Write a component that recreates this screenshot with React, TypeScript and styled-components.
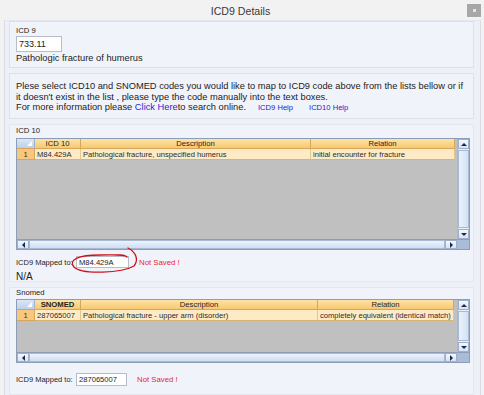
import React from "react";
import styled, { createGlobalStyle } from "styled-components";

const Global = createGlobalStyle`
  html, body { margin: 0; padding: 0; background: #f2f2f2; }
  body { font-family: "Liberation Sans", Arial, sans-serif; color: #1e1e1e; }
  #root { width: 484px; height: 395px; overflow: hidden; }
`;

const Window = styled.div`
  width: 484px;
  height: 395px;
  display: flex;
  flex-direction: column;
  background: #f2f2f2;
`;

const TitleBar = styled.div`
  height: 20px;
  display: grid;
  grid-template-columns: 1fr auto 1fr;
  align-items: center;
  padding: 0 3px 0 0;
  box-sizing: border-box;
`;

const Title = styled.div`
  grid-column: 2;
  font-size: 10.6px;
  color: #3a3a3a;
  padding-top: 1px;
`;

const CloseBtn = styled.div`
  grid-column: 3;
  justify-self: end;
  width: 14px;
  height: 13px;
  background: #a7a7a7;
  display: flex;
  align-items: center;
  justify-content: center;
  &::after {
    content: "";
    width: 3px;
    height: 3px;
    background: #e4e4e4;
  }
`;

const Panel = styled.div`
  flex: 1;
  margin: 0 3px 0 4px;
  border-left: 1px solid #d9dce4;
  border-right: 1px solid #d9dce4;
  border-top: 1px solid #e4e6ee;
  background: #eef0f8;
  padding: 0 6px 0 4px;
  display: flex;
  flex-direction: column;
  gap: 5px;
  overflow: hidden;
`;

const Group = styled.div<{ $pt?: number; $pb?: number; $pl?: number; $soft?: boolean }>`
  flex-shrink: 0;
  background: #f1f3fb;
  border: 1px solid ${(p) => (p.$soft ? "#e4e7f0" : "#dde0ea")};
  padding: ${(p) => p.$pt ?? 4}px 6px ${(p) => p.$pb ?? 3}px ${(p) => p.$pl ?? 6}px;
  display: flex;
  flex-direction: column;
  align-items: flex-start;
`;

const SmallLabel = styled.div<{ $lh?: number }>`
  font-size: 7.7px;
  line-height: ${(p) => p.$lh ?? 11}px;
  color: #222;
`;

const CodeInput = styled.div<{ $w: number; $h: number; $fs: number }>`
  width: ${(p) => p.$w}px;
  height: ${(p) => p.$h}px;
  box-sizing: border-box;
  background: #fff;
  border: 1px solid #b9bcc6;
  font-size: ${(p) => p.$fs}px;
  display: flex;
  align-items: center;
  padding-left: 2px;
  color: #222;
`;

const BodyText = styled.div<{ $fs?: number; $lh?: number; $mt?: number }>`
  font-size: ${(p) => p.$fs ?? 9.3}px;
  line-height: ${(p) => p.$lh ?? 12}px;
  margin-top: ${(p) => p.$mt ?? 0}px;
  color: #222;
`;

const InfoText = styled.div`
  font-size: 9.3px;
  line-height: 10.6px;
  color: #222;
`;

const LinkLine = styled.div`
  display: flex;
  align-items: baseline;
  font-size: 9.3px;
  line-height: 11px;
  color: #222;
`;

const Link = styled.span`
  color: #2626d8;
`;

const HelpLink = styled.span<{ $ml: number }>`
  color: #2222cc;
  font-size: 7.6px;
  margin-left: ${(p) => p.$ml}px;
`;

const GridBox = styled.div<{ $h: number; $mt: number }>`
  margin-top: ${(p) => p.$mt}px;
  width: 454px;
  height: ${(p) => p.$h}px;
  flex: 0 0 ${(p) => p.$h}px;
  box-sizing: border-box;
  border: 1px solid #8d9db5;
  display: grid;
  grid-template-columns: 1fr 12px;
  grid-template-rows: 1fr 10px;
  background: #c0c0c0;
`;

const GridBody = styled.div`
  display: flex;
  flex-direction: column;
  overflow: hidden;
`;

const Row = styled.div<{ $cols: string; $h: number }>`
  display: grid;
  grid-template-columns: ${(p) => p.$cols};
  height: ${(p) => p.$h}px;
`;

const HeadCell = styled.div<{ $bold?: boolean }>`
  background: linear-gradient(#fde3a6, #f7c970);
  border-right: 1px solid #d7a656;
  border-bottom: 1px solid #d7a656;
  font-size: 7.7px;
  font-weight: ${(p) => (p.$bold ? 700 : 400)};
  color: #1f1f1f;
  display: flex;
  align-items: center;
  justify-content: center;
  overflow: hidden;
  white-space: nowrap;
`;

const CornerCell = styled.div`
  background: linear-gradient(#dce6f6, #bccfec);
  border-right: 1px solid #9fb2cf;
  border-bottom: 1px solid #d7a656;
  position: relative;
  &::after {
    content: "";
    position: absolute;
    right: 2px;
    bottom: 2px;
    width: 0;
    height: 0;
    border-left: 5px solid transparent;
    border-bottom: 5px solid #ffffff;
  }
`;

const RowHeadCell = styled.div`
  background: #f9c77c;
  border-right: 1px solid #d7a656;
  border-bottom: 1px solid #d7a656;
  font-size: 7.6px;
  display: flex;
  align-items: center;
  justify-content: center;
  color: #333;
`;

const DataCell = styled.div`
  background: #feebc6;
  border-right: 1px solid #e3c690;
  border-bottom: 1px solid #d8b46e;
  font-size: 7.6px;
  display: flex;
  align-items: center;
  padding-left: 2px;
  overflow: hidden;
  white-space: nowrap;
  color: #2a2a2a;
`;

const VScroll = styled.div`
  background: #e6eef9;
  border-left: 1px solid #a9b8cf;
  display: flex;
  flex-direction: column;
`;

const HScroll = styled.div`
  background: #e6eef9;
  border-top: 1px solid #8d9db5;
  display: flex;
`;

const ArrowBtn = styled.div<{ $dir: "up" | "down" | "left" | "right" }>`
  flex: 0 0 ${(p) => (p.$dir === "up" || p.$dir === "down" ? "10px" : "12px")};
  background: linear-gradient(#f4f8fd, #d6e3f5);
  border: 1px solid #9eb0cb;
  box-sizing: border-box;
  display: flex;
  align-items: center;
  justify-content: center;
  &::after {
    content: "";
    width: 0;
    height: 0;
    ${(p) =>
      p.$dir === "up"
        ? "border-left:3px solid transparent;border-right:3px solid transparent;border-bottom:3px solid #1c2a44;"
        : p.$dir === "down"
        ? "border-left:3px solid transparent;border-right:3px solid transparent;border-top:3px solid #1c2a44;"
        : p.$dir === "left"
        ? "border-top:3px solid transparent;border-bottom:3px solid transparent;border-right:3px solid #1c2a44;"
        : "border-top:3px solid transparent;border-bottom:3px solid transparent;border-left:3px solid #1c2a44;"}
  }
`;

const Thumb = styled.div`
  flex: 1;
  background: linear-gradient(90deg, #eaf1fb, #d4e2f5);
  border: 1px solid #a7b9d3;
  box-sizing: border-box;
  margin: 1px 0;
`;

const HThumb = styled.div`
  flex: 1;
  background: linear-gradient(#edf3fc, #cfdef3);
  border: 1px solid #a7b9d3;
  box-sizing: border-box;
`;

const ScrollCorner = styled.div`
  background: #a9bcd8;
  border-top: 1px solid #8d9db5;
  border-left: 1px solid #a9b8cf;
`;

const MappedRow = styled.div<{ $mt: number }>`
  position: relative;
  margin-top: ${(p) => p.$mt}px;
  display: flex;
  align-items: center;
`;

const MappedLabel = styled.span`
  font-size: 7.5px;
  color: #222;
  width: 60px;
`;

const NotSaved = styled.span`
  font-size: 7.8px;
  color: #e8282c;
  margin-left: 10px;
`;

const Annotation = styled.svg`
  position: absolute;
  left: 0;
  top: 0;
  overflow: visible;
  pointer-events: none;
`;

type GridProps = {
  cols: string;
  heads: string[];
  cells: string[];
  height: number;
  mt: number;
  boldFirst?: boolean;
};

function DataGrid({ cols, heads, cells, height, mt, boldFirst }: GridProps) {
  return (
    <GridBox $h={height} $mt={mt}>
      <GridBody>
        <Row $cols={cols} $h={10}>
          <CornerCell />
          {heads.map((h, i) => (
            <HeadCell key={h} $bold={boldFirst && i === 0}>
              {h}
            </HeadCell>
          ))}
        </Row>
        <Row $cols={cols} $h={11}>
          <RowHeadCell>1</RowHeadCell>
          {cells.map((c) => (
            <DataCell key={c}>{c}</DataCell>
          ))}
        </Row>
      </GridBody>
      <VScroll>
        <ArrowBtn $dir="up" />
        <Thumb />
        <ArrowBtn $dir="down" />
      </VScroll>
      <HScroll>
        <ArrowBtn $dir="left" />
        <HThumb />
        <ArrowBtn $dir="right" />
      </HScroll>
      <ScrollCorner />
    </GridBox>
  );
}

export default function App() {
  return (
    <>
      <Global />
      <Window>
        <TitleBar>
          <Title>ICD9 Details</Title>
          <CloseBtn />
        </TitleBar>
        <Panel>
          <Group $pt={3} $pb={3}>
            <SmallLabel>ICD 9</SmallLabel>
            <CodeInput $w={46} $h={16} $fs={9}>733.11</CodeInput>
            <BodyText>Pathologic fracture of humerus</BodyText>
          </Group>
          <Group $pt={7} $pb={5}>
            <InfoText>
              Plese select ICD10 and SNOMED codes you would like to map to ICD9 code above from the lists bellow or if
              it doesn't exist in the list , please type the code manually into the text boxes.
            </InfoText>
            <LinkLine>
              For more information please&nbsp;<Link>Click Here</Link>to search online.
              <HelpLink $ml={12}>ICD9 Help</HelpLink>
              <HelpLink $ml={16}>ICD10 Help</HelpLink>
            </LinkLine>
          </Group>
          <Group $pt={0} $pb={0} $soft>
            <SmallLabel>ICD 10</SmallLabel>
            <DataGrid
              mt={2}
              height={112}
              cols="18px 46px 230px 144px 1fr"
              heads={["ICD 10", "Description", "Relation"]}
              cells={["M84.429A", "Pathological fracture, unspecified humerus", "initial encounter for fracture"]}
            />
            <MappedRow $mt={6}>
              <MappedLabel>ICD9 Mapped to:</MappedLabel>
              <CodeInput $w={53} $h={12} $fs={7.6}>M84.429A</CodeInput>
              <NotSaved>Not Saved !</NotSaved>
              <Annotation width="160" height="30">
                <path
                  d="M112 -8 C120 -4, 123 4, 118 10 C106 17, 66 19, 58 11 C52 4, 62 -1, 84 -1 C99 -1, 108 -2, 111 1"
                  fill="none"
                  stroke="#d0101a"
                  strokeWidth="1.3"
                  strokeLinecap="round"
                />
              </Annotation>
            </MappedRow>
            <BodyText $fs={10} $lh={8} $mt={5}>N/A</BodyText>
          </Group>
          <Group $pt={0} $pb={8} $soft>
            <SmallLabel $lh={9}>Snomed</SmallLabel>
            <DataGrid
              mt={2}
              height={64}
              boldFirst
              cols="18px 46px 237px 136px 1fr"
              heads={["SNOMED", "Description", "Relation"]}
              cells={["287065007", "Pathological fracture - upper arm (disorder)", "completely equivalent (identical match)"]}
            />
            <MappedRow $mt={10}>
              <MappedLabel>ICD9 Mapped to:</MappedLabel>
              <CodeInput $w={51} $h={13} $fs={7.6}>287065007</CodeInput>
              <NotSaved>Not Saved !</NotSaved>
            </MappedRow>
          </Group>
        </Panel>
      </Window>
    </>
  );
}
